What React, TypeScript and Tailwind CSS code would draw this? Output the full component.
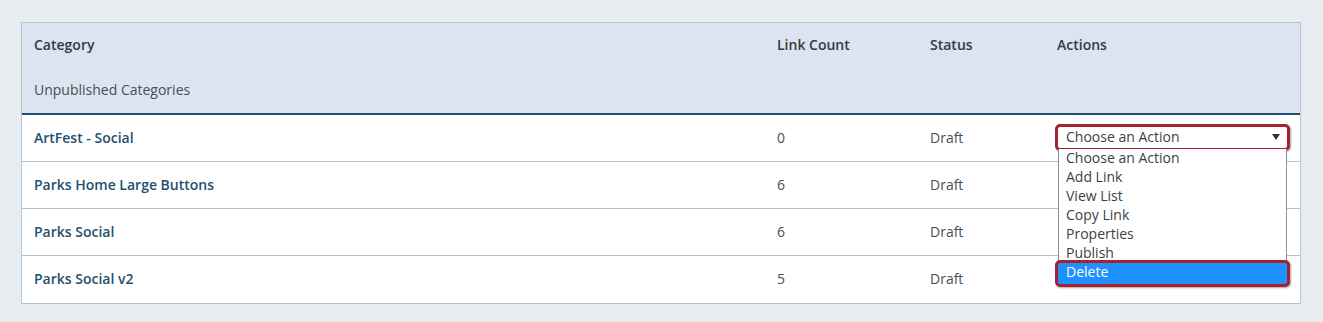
import React from "react";

const rows = [
  { name: "ArtFest - Social", count: "0", status: "Draft" },
  { name: "Parks Home Large Buttons", count: "6", status: "Draft" },
  { name: "Parks Social", count: "6", status: "Draft" },
  { name: "Parks Social v2", count: "5", status: "Draft" },
];

const options = ["Choose an Action", "Add Link", "View List", "Copy Link", "Properties", "Publish"];

const cols = "grid grid-cols-[743px_153px_127px_1fr]";

export default function App() {
  return (
    <div
      className="w-[1323px] h-[322px] bg-[#e8edf2] pt-[22px] pl-[21px]"
      style={{ fontFamily: "'Open Sans', 'Liberation Sans', sans-serif" }}
    >
      <div className="w-[1280px] border border-[#b7c3d3] bg-white">
        <div className="bg-[#dbe4f0] border-b-2 border-[#1f4d74]">
          <div className={`${cols} h-[42px] items-center text-[14px] font-semibold text-[#333a42]`}>
            <div className="pl-3">Category</div>
            <div className="pl-3">Link Count</div>
            <div className="pl-3">Status</div>
            <div className="pl-3">Actions</div>
          </div>
          <div className="h-[48px] flex items-center pl-3 text-[14px] text-[#4a4f55]">
            Unpublished Categories
          </div>
        </div>
        {rows.map((r, i) => (
          <div
            key={r.name}
            className={`${cols} h-[47px] pb-[2px] items-center text-[14px] ${i < rows.length - 1 ? "border-b border-[#b7c3d3]" : ""}`}
          >
            <div className="pl-3 font-semibold text-[#24506f]">{r.name}</div>
            <div className="pl-3 text-[#4a4f55]">{r.count}</div>
            <div className="pl-3 text-[#4a4f55]">{r.status}</div>
            <div className="pl-3 text-[#4a4f55]">
              {i === 0 && (
                <div className="relative -ml-[2px] w-[235px]">
                  <div className="h-[27px] border-[3px] border-[#a5222e] rounded-[5px] bg-white flex items-center justify-between pl-[8px] pr-[7px] shadow-[1px_1px_2px_rgba(0,0,0,0.35)]">
                    <span className="text-[14px] text-[#3a3f45] leading-none">Choose an Action</span>
                    <svg width="8" height="6" viewBox="0 0 8 6">
                      <path d="M0 0 H8 L4 6 Z" fill="#333" />
                    </svg>
                  </div>
                  <div className="absolute left-[3px] top-[25px] w-[229px] bg-white border border-[#8292a3] border-t-0 h-[112px] z-10 pt-[-1px]">
                    {options.map((o) => (
                      <div key={o} className="h-[19px] leading-[17px] pl-[7px] text-[14px] text-[#3a3f45]">
                        {o}
                      </div>
                    ))}
                  </div>
                  <div className="absolute left-0 top-[136px] w-[235px] h-[27px] border-[3px] border-[#a5222e] rounded-[5px] bg-[#1e90ff] z-20 flex items-center pl-[8px] pb-[2px] shadow-[1px_1px_2px_rgba(0,0,0,0.35)]">
                    <span className="text-[14px] text-white leading-none">Delete</span>
                  </div>
                </div>
              )}
            </div>
          </div>
        ))}
      </div>
    </div>
  );
}
